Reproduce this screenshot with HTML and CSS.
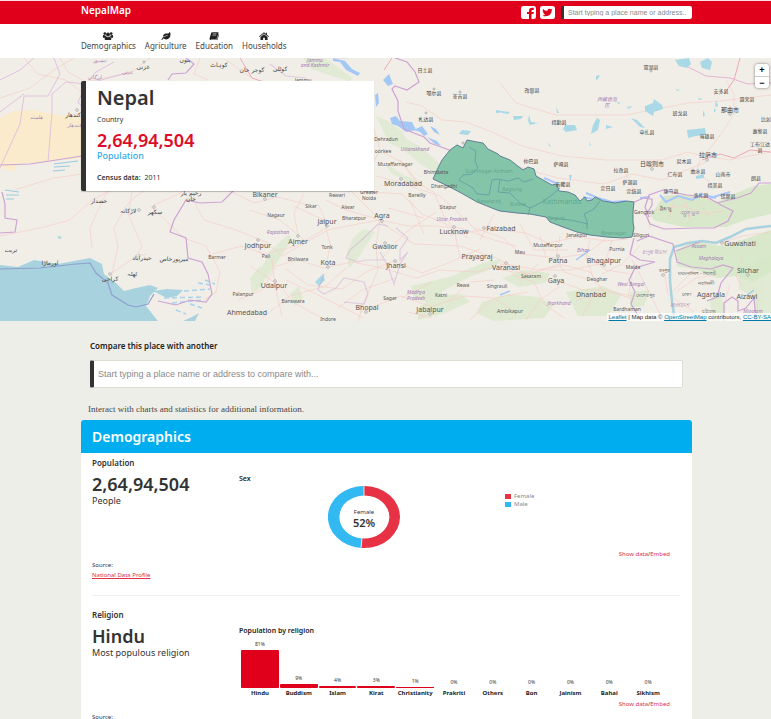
FILE: index.html
```html
<!DOCTYPE html>
<html lang="en">
<head>
<meta charset="utf-8">
<title>NepalMap: Nepal</title>
<link rel="stylesheet" href="styles.css">
</head>
<body>
<header class="topbar">
  <div class="wrap topbar-inner">
    <a class="brand" href="#">NepalMap</a>
    <div class="topbar-tools">
      <a class="social" href="#" aria-label="Facebook"><svg viewBox="0 0 15 14" preserveAspectRatio="none"><rect width="15" height="14" rx="2.5" fill="#fff"/><path d="M8 14V8.600H6V6.400H8V5c0-2 1.200-3 3-3h1.800v2.200h-1.300c-.8 0-1 .4-1 1v1.200h2.300l-.3 2.200h-2V14z" fill="#e0001b"/></svg></a>
      <a class="social" href="#" aria-label="Twitter"><svg viewBox="0 0 15 14" preserveAspectRatio="none"><rect width="15" height="14" rx="2.500" fill="#fff"/><path transform="translate(2.300 1.900) scale(.0203 .0198)" fill="#e0001b" d="M459.370 151.716c.325 4.548.325 9.097.325 13.645 0 138.720-105.583 298.558-298.558 298.558-59.452 0-114.680-17.219-161.137-47.106 8.447.974 16.568 1.299 25.340 1.299 49.055 0 94.213-16.568 130.274-44.832-46.132-.975-84.792-31.188-98.112-72.772 6.498.974 12.995 1.624 19.818 1.624 9.421 0 18.843-1.300 27.614-3.573-48.081-9.747-84.143-51.980-84.143-102.985v-1.299c13.969 7.797 30.214 12.670 47.431 13.319-28.264-18.843-46.781-51.005-46.781-87.391 0-19.492 5.197-37.360 14.294-52.954 51.655 63.675 129.300 105.258 216.365 109.807-1.624-7.797-2.599-15.918-2.599-24.040 0-57.828 46.782-104.934 104.934-104.934 30.213 0 57.502 12.670 76.670 33.137 23.715-4.548 46.456-13.320 66.599-25.340-7.798 24.366-24.366 44.833-46.132 57.827 21.117-2.273 41.584-8.122 60.426-16.243-14.292 20.791-32.161 39.308-52.628 54.253z"/></svg></a>
      <input class="top-search" type="text" aria-label="Find a place" placeholder="Start typing a place name or address..">
    </div>
  </div>
</header>

<nav class="mainnav">
  <div class="wrap mainnav-inner">
    <a href="#"><svg viewBox="0 0 12 9"><circle cx="2.400" cy="1.800" r="1.500"/><circle cx="9.600" cy="1.800" r="1.500"/><circle cx="6" cy="2.900" r="2.200"/><path d="M.2 6.300V4.800c0-1 .6-1.400 1.300-1.400.6.500 1 .6 1.800.5.100.8.400 1.300.9 1.700-.8.100-1.400.4-1.800.9H.7c-.3 0-.5-.1-.5-.2zM11.800 6.300V4.800c0-1-.6-1.400-1.300-1.400-.6.500-1 .6-1.800.5-.1.8-.4 1.300-.9 1.700.8.100 1.400.4 1.800.9h1.700c.3 0 .5-.1.5-.2zM2.200 7.900c0-1.400.5-2.700 1.900-2.700 1.200.8 2.600.8 3.800 0 1.400 0 1.900 1.300 1.900 2.700 0 .7-.4 1.100-1.100 1.100H3.300c-.7 0-1.100-.4-1.100-1.100z"/></svg>Demographics</a>
    <a href="#"><svg viewBox="0 0 576 512"><path d="M546.200 9.700c-5.600-12.500-21.600-13-28.300-1.200C486.900 62.400 431.400 96 368 96h-80C182 96 96 182 96 288c0 7 .8 13.700 1.500 20.500C161.300 262.800 253.400 224 384 224c8.800 0 16 7.200 16 16s-7.200 16-16 16C132.600 256 26 410.100 2.400 468c-6.600 16.300 1.200 34.900 17.500 41.600 16.400 6.800 35-1.100 41.800-17.300 1.500-3.600 20.900-47.900 71.900-90.600 32.400 43.900 94 85.800 174.900 77.200C465.500 467.500 576 326.700 576 154.300c0-50.200-10.800-102.200-29.800-144.600z"/></svg>Agriculture</a>
    <a href="#"><svg viewBox="0 0 12 9"><path d="M4 .3h6.300c.6 0 .9.500.7 1L9.300 7.100c-.1.400-.5.700-.9.700H2.600c-.3 0-.4.500 0 .5h6.200c.4 0 .7-.2.800-.6l1.600-5.400c.4.200.5.600.4 1L10 8.300c-.1.400-.5.700-1 .7H2.400C1.300 9 .7 8.100 1 7.200L2.800 1.200C3 .6 3.400.300 4 .300z"/><path d="M4.700 2h4.200M4.200 3.600h4.200" stroke="#fff" stroke-width=".6"/></svg>Education</a>
    <a href="#"><svg viewBox="0 0 12 9"><path d="M6 .3l2 1.700V.8h1.300v2.300L11.700 5l-.6.7L6 1.600.9 5.700.300 5z"/><path d="M6 2.400l4 3.200V9H7V6.400H5V9H2V5.600z"/></svg>Households</a>
  </div>
</nav>

<main>
<section class="map" aria-label="Map of Nepal">
  <svg class="map-canvas" viewBox="0 58 771 263" preserveAspectRatio="xMidYMid slice">
    <rect y="58" width="771" height="263" fill="#f1eee8"/>
    <!-- Desert -->
    <path d="M0 118L14 111 32 110 52 114 82 118V158L46 162 17 164 14 172 0 168z" fill="#f9ebcb"/>
    <!-- Forest and farmland -->
    <g fill="#d5e8c6" opacity=".6">
      <path d="M303 58l22 0 14 10 14 10-4 3-20-6-18-6zM376 116l12 5 14 10 4 8 15 8 20 18-6 8-16-10-14-12-16-8zM385 163l17 11 22 10-8 3-25-14zM271 250l18-16 3 5-14 22-12 18-8-4zM353 238l10-9 12 3-8 12-10 16-8 8-2-16zM411 286l38-9 34-14 18-4-6 9-26 9-26 14-13 12-16-4zM418 308l16-12 28-2 8 8-28 12-24 6zM482 302l26-8 30 3 16 8-10 13-50 3-18-8zM502 278l22-8 26 3-5 10-26 4zM566 292l36-6 20 8-14 22-30 0zM630 292l20-2-6 16-14 2z"/>
      <path d="M738 268l33-14v67h-14l-4-24-14-8z"/>
      <path d="M710 300l8-8 8 16-4 13h-10zM250 278l10-12 8 4-6 16-10 8zM290 294l9-8 4 12-8 8z"/>
    </g>
    <g fill="#d5e8c6" opacity=".85">
      <path d="M650 216l14-20 22-2 20 5 18 4 6 20-2 4-44 0-28-6z"/>
      <path d="M714 204l20-10 20-8 17-2v30l-26 6-16 6-18-6z"/>
      <path d="M676 250l20-9 24 5 22-6 29-10v42l-18 10-18-6-18 2-20-8-20-4z"/>
    </g>
    <!-- Sea -->
    <path d="M0 265l18 2 16-7 24 4 16-3 16-3 12 6 2 10 12 9 8 8 12-3 14-3 8 3-8 8-4 10 12 15H0z" fill="#a9d2df"/>
    <path d="M153 291l14-2 16 1-6 6-10 2zM192 317l7-4-4 8h-12zM136 298l10-3 4 3-10 4z" fill="#a9d2df"/>
    <path d="M160 293l50-4M164 298l40-1M172 303l32-3M198 283l12 2M205 280l10 4M176 310l10 4M190 304l12 4" stroke="#a9d2ec" stroke-width="1.500" stroke-dasharray="5 3" fill="none"/>
    <path d="M54 164l24-3M54 167l16-1M53 171l12-1M5 190l14 2M6 195l13 0M6 199l8 0" stroke="#98cbe0" stroke-width="1" fill="none"/>
    <!-- Roads -->
    <g fill="none" stroke="#f7cfc7" stroke-width=".7">
      <path d="M0 98l30-10 24-18 20-12M24 58l14 16 28 6 18 14M60 58l8 14 18 10M150 58l-18 14-46 10M200 58l-6 16 14 6M226 60l26 18M14 190l40-12 28-4M0 236l40-8 30-8 22-20 20-10M92 248l-2-20 10-22 8-16M112 274l6-28-4-18 12-22 10-10 24-14M110 274l24-16 12-4M132 192l-4 22 14 32-8 14M154 205l22-10 20-10 34 6 24 12 24-6 30 8M150 206l34 32 22 8 14 26-4 20-12 8M188 190l16 30 32 10 30 12 16 14M212 254l30-8 22 8 32-8 30-18M238 300l24-10 14-24 22-6 26 8 28-6 30 6 34 10 24-8 36 2 28-8 34 6 24-4M258 251l14 8 2 20 20 24 26 14M282 256l46-26 30-6 22-4 28 6 26 0 26 2 34 12 22 6M326 200l20 10 28 8 40 26 46 2 36 12 34 18M350 190l16 16 14 14-4 26 2 24-14 32-6 19M372 122l8 28-14 26 6 16 30 2 20 20 24 10 22 14M400 160l16 22 18 10 10 24 10 12 6 30 22 2M418 182l-16-20-20-10M376 176l22 6 42 14 24 22 20 20M394 261l-26 10-26 18-34-4-22-16M394 261l28 12 26-10 32-14M450 235l40-6 36 4 22 10 30-6 28 4 22-2M475 228l28 10 18 16 36 4 28-4 20-14M433 306l-12 12M433 306l32-10 28 2 20 12M500 270l30 4 30-10 30 8 14 20M555 280l28 10 24 0 28 10M500 262l16 14 18 6 10 22 20 14M588 256l18 14 26 4-4 24M556 258l8 14 26 8M640 246l-18 18-20 10M640 236l-16-12M632 260l16 30 12 24M664 270l4 24 26 18M676 292l20-14 24-4M680 200l20-4 20 8M656 210l26-4 24 8 18-4M520 224l14 26 34 0M540 236l6 22M560 236l-4 20M590 240l-4 18 10 26M612 240l-6 20M700 242l24 0 18-6 29-4M742 286l-6-10 6-20M702 156l-14-4-26 8-56 0-44-4-40-10-30-14-26-10-24-2-20-14-16-4M500 83l16 20 40 12 70 0 62-12 32-2 51-6M726 80l8 14 0 20-10 16-20 26M707 156l22 4 42-8M700 160l-4 12 14 10M508 164l50 14 46 6 28-10 30 6 44-18M626 174l10 20"/>
      <path d="M286 280l30 14 48 24M250 266l24 16 8 34M262 318l28-22 36-10 20-18M326 268l4-24-6-24-30-14M298 235l-4-22 10-20M250 210l30 10 24 20M328 226l-10-22M338 308l24-18 34-12M360 312l40-16 30 10M402 298l30-16M408 312l24 6M450 300l20-18 24-2M470 320l24-22 34-6M576 300l34-8 22 4M592 297l-10 20M480 240l14-26M436 212l-30 20-26 28M410 200l14 34M388 208l36 10M526 320l14-20 20-14M540 270l30 0 40-8M520 282l18-18M702 262l-30 30M724 304l6-20M758 300l-2 20M650 228l-2-10 8-8M668 220l6-18M690 222l-4-20M710 216l-12-14"/>
    </g>
    <path d="M740 58l-6 22-10 14M240 58l12 20 18 6M392 58l-8 12M702 160l18-6 14 4 16-8 21 2" fill="none" stroke="#eea9b7" stroke-width="1"/>
    <path d="M686 66l20 10 24 2 18 6 23-1" fill="none" stroke="#e5b4d4" stroke-width="1"/>
    <!-- Lakes and rivers -->
    <g fill="#a9d8e6">
      <path d="M596 76l4-1-2 4-2 1zM675 60l14-2 2 6-4 4-8-2zM700 62l8-4 4 4-2 8-8-2zM645 106l8-3 1-4 8 6 1 4-9 3-1 4-8-5zM565 125l10 0 2 5-11 2-3-3zM597 118l3 2-2 10-7 4 2-9zM606 125l7 2-7 2zM631 118l6 2 8 8-5-1zM687 130l18-2 1 7-10 1-8 2zM502 111l8 1-2 2-6-1zM513 116l10 0-2 3-7 1zM529 115l2 7 7 1-8 2-2-4zM556 107l3 6-2 0zM627 107l6-1-5 3zM617 102l4 1-3 1zM698 98l5 1-4 1zM716 100l2 6-3 1zM714 108l2 2-2 3zM703 110l2 5-2 2zM676 89l4 1-3 1zM548 142l3 5-2-1zM459 134l3-4 9 1-3 4zM502 110l4-1M496 110l10 2-10 1zM589 141l2 4-1 1zM569 175l3 0-2 7zM696 176l8-2 0 4-8 1zM57 237l3-1 2 2-3 1zM315 282l8-8 2 6-6 6z"/>
      <path d="M333 58l12 3 7 8 8 4-2 3-12-6-6-8-7-1zM383 80l6-6 4 10-5 2zM375 95l3-2 1 10-3 4zM390 118l6-2 4 5 12 1 4 8-10 2-8-6-6-2zM414 130l8-4 6 8-4 2-4-4zM427 137l10 4 4 5-6-2zM430 126l4 6 6 3-4-6z" fill="#a4c8f5"/>
    </g>
    <path d="M674 315l-2-14-2-20 0-22 4-12 14-4 14-2 14 2 14-6 16-8 25-3" fill="none" stroke="#a9d2df" stroke-width="2.500"/>
    <path d="M586 193l12 5 14 4 14-1M583 197l18 4M544 178l14 6M640 198l10-1M660 195l6 7 12-6 14 4 10-6 14 4M710 198l20-6" fill="none" stroke="#a9c6fa" stroke-width="2"/>
    <path d="M746 296l8-6M590 250l-14 10M500 295l10-4" fill="none" stroke="#a4c8f0" stroke-width="1.500"/>
    <!-- Borders -->
    <g fill="none" stroke="#cda3d4" stroke-width="1.200">
      <path d="M168 80l4-6 14-1 8-9-8-6M0 165l30-1 20-3 32-5M2 192l3 12 0 14 12 2-2 12-15 1M234 190l-12 12-22 1-14-3-12 20-4 12 16 6 2 20 14 4 6 12 4 20-6 8-16-2-14 5-18-4M395 58l12 4 8 10 4 10-12 8-12-4-3 3 6 12 0 10 6 18 20 8 6 6 22 8 16 8"/>
      <path d="M0 269l40-1 36-4 14-1 6 10 12 10 4 12 16 10 8 2 12-3 6-10" stroke="#8f9fce"/>
      <path d="M634 202l10-4 8 1 0 6-6 10 4 9 14 5 32-1 18 0 14-7 5-10-12-6-14-8-20-2-24-5-14 5-4 12 4 10M771 183l-12 0-8 10-14 5-20 5M637 241l12-5 12 4 12 4 4 18 14 5 20 2 12-4 10 3-12 15-4 14-10 4M634 238l-4 16 10 6 15 2-20 6-6 12 6 12-4 12 10 16M700 242l-24 9M724 321l0-18 8-6 6 4 0 10 8-3 8-10 2 23"/>
      <path d="M388 226l-10-2-12 12-16 14-4 8 12 4 8-2 20 0M396 228l12 10-8 12 0 10 8-8-8 12-6 20-6-18-8-14M348 58l-12 0M270 64l16 12 20 2M324 274l-6 16 6 4 12-6 8-10 20 4 4 12-4 10-20-2" opacity=".45"/>
    </g>
    <g fill="none" stroke="#dbb8de" stroke-width=".8">
      <path d="M54 58l6 16-12 22-24 0-4 28-20 44M24 94l-24 18M52 112l0-18 14-12 20 2 10-12 18-10M52 112l-4 50M86 84l-8 18 6 8M0 80l20-10 14-12M94 82l36-10"/>
    </g>
    <!-- Selected country -->
    <path class="country" d="M433 179l4-9 5-10 8-10 7-5 6 3 4-8 10 2 6 1 5 6 10 5 2 2 10 4 13 10 5-3 6 2 2 7 7 4 9 5 5-1 2 7 9 1 7 3 5 6 5-4 2 4 5-1 3-3 8 4 12 2 12-2 7 1-1 10 0 10 1 6-2 9-9 1-16-1-17-2-13-3-14-5-13-5-4-5-16-3-13-1-17-2-3-1-20-8-14-8-13-7z"/>
    <path d="M469 147l7 4-1 10 3 7-6 6-9 1-4 5 14 8 4 6 12 1 3-15 6-1 10 2 10-3 6 4 9-3M500 180l-2 12 12 1 10 10 10 5 12-6 10-7 8-7M530 208l-2 7M550 218l20 2 18 4M600 201l-6 8-10 5 3 7 0 8" fill="none" stroke="#5f9ba0" stroke-width=".8"/>
    <g class="lb-dim">
      <text x="489" y="173">Sukhinagar-Airtham</text><text x="512" y="191">Baglung</text><text x="518" y="206">Butwal</text><text x="562" y="204" class="md">Kathmandu</text><text x="556" y="220">Birgunj</text><text x="614" y="235">Biratnagar</text><text x="489" y="203">Nepalgunj</text>
    </g>
    <!-- Place markers -->
    <g fill="#fff" stroke="#888" stroke-width=".6">
      <circle cx="382" cy="221" r="1.300"/><circle cx="454" cy="227" r="1.300"/><circle cx="484" cy="228" r="1.300"/><circle cx="298" cy="236" r="1.300"/><circle cx="385" cy="243" r="1.300"/><circle cx="395" cy="261" r="1.300"/><circle cx="327" cy="226" r="1.300"/><circle cx="328" cy="267" r="1.300"/><circle cx="258" cy="240" r="1.300"/><circle cx="275" cy="281" r="1.300"/><circle cx="265" cy="199" r="1.300"/><circle cx="401" cy="179" r="1.300"/><circle cx="506" cy="263" r="1.300"/><circle cx="558" cy="256" r="1.300"/><circle cx="604" cy="265" r="1.300"/><circle cx="555" cy="276" r="1.300"/><circle cx="722" cy="243" r="1.300"/><circle cx="748" cy="275" r="1.300"/><circle cx="707" cy="160" r="1.300"/><circle cx="652" cy="169" r="1.300"/><circle cx="730" cy="114" r="1.300"/><circle cx="77" cy="110" r="1.300"/><circle cx="110" cy="274" r="1.300"/><circle cx="154" cy="207" r="1.300"/><circle cx="139" cy="210" r="1.300"/><circle cx="366" cy="312" r="1.300"/><circle cx="430" cy="314" r="1.300"/><circle cx="663" cy="275" r="1.300"/><circle cx="562" cy="185" r="1"/><circle cx="144" cy="62" r="1"/><circle cx="463" cy="143" r="1"/><circle cx="532" cy="93" r="1"/><circle cx="434" cy="89" r="1"/><circle cx="460" cy="92" r="1"/><circle cx="426" cy="113" r="1"/><circle cx="651" cy="71" r="1"/>
    </g>
    <g class="lb-lg">
      <text x="403" y="186">Moradabad</text><text x="382" y="218">Agra</text><text x="454" y="234">Lucknow</text><text x="501" y="231">Faizabad</text><text x="327" y="224">Jaipur</text><text x="298" y="244">Ajmer</text><text x="385" y="249">Gwalior</text><text x="396" y="268">Jhansi</text><text x="328" y="265">Kota</text><text x="258" y="248">Jodhpur</text><text x="274" y="288">Udaipur</text><text x="247" y="315">Ahmedabad</text><text x="367" y="310">Bhopal</text><text x="430" y="312">Jabalpur</text><text x="265" y="197">Bikaner</text><text x="477" y="259">Prayagraj</text><text x="506" y="270">Varanasi</text><text x="558" y="263">Patna</text><text x="604" y="263">Bhagalpur</text><text x="556" y="283">Gaya</text><text x="591" y="297">Dhanbad</text><text x="740" y="246">Guwahati</text><text x="748" y="273">Silchar</text><text x="711" y="297">Agartala</text><text x="747" y="299">Aizawl</text>
    </g>
    <g class="lb-md">
      <text x="386" y="141">Dehradun</text><text x="395" y="166">Muzaffarnagar</text><text x="417" y="197">Bareilly</text><text x="448" y="209">Sitapur</text><text x="337" y="197">Rewari</text><text x="369" y="194">Greater</text><text x="369" y="200">Noida</text><text x="311" y="208">Sikar</text><text x="348" y="209">Alwar</text><text x="354" y="220">Bharatpur</text><text x="276" y="217">Nagaur</text><text x="327" y="249">Tonk</text><text x="266" y="258">Pali</text><text x="298" y="261">Bhilwara</text><text x="217" y="259">Barmer</text><text x="243" y="296">Palanpur</text><text x="293" y="303">Banswara</text><text x="328" y="321">Indore</text><text x="390" y="300">Sagar</text><text x="441" y="297">Katni</text><text x="463" y="287">Rewa</text><text x="497" y="288">Singrauli</text><text x="510" y="313">Ambikapur</text><text x="531" y="278">Sasaram</text><text x="520" y="254">Mau</text><text x="548" y="247">Muzaffarpur</text><text x="617" y="251">Purnia</text><text x="577" y="237">Janakpur</text><text x="597" y="281">Deoghar</text><text x="633" y="269">Malda</text><text x="627" y="311">Bardhaman</text><text x="644" y="214">Gangtok</text><text x="641" y="237">Siliguri</text><text x="444" y="188">Dhangadhi</text><text x="436" y="174">Bhimdatta</text><text x="303" y="82">Jammu</text><text x="383" y="153">oorkee</text><text x="665" y="211">ཐིམ་ཕུ</text><text x="664" y="272">রংপুর</text><text x="697" y="275">ময়মনসিংহ - সিলেট</text><text x="706" y="285">নরসিংদী</text><text x="645" y="297">মেহেরপুর</text><text x="686" y="296">ঢাকা</text><text x="709" y="313">চট্টগ্রাম</text>
    </g>
    <g class="lb-state">
      <text x="315" y="62">Jammu</text><text x="315" y="67">and Kashmir</text><text x="415" y="151">Uttarakhand</text><text x="452" y="221">Uttar Pradesh</text><text x="278" y="234">Rajasthan</text><text x="416" y="294">Madhya</text><text x="416" y="300">Pradesh</text><text x="583" y="252">Bihar</text><text x="559" y="305">Jharkhand</text><text x="631" y="286">West Bengal</text><text x="699" y="248">Assam</text><text x="711" y="260">Meghalaya</text><text x="753" y="313">Mizoram</text><text x="654" y="254">রংপুর বিভাগ</text><text x="679" y="307">বাংলাদেশ</text><text x="689" y="215">འབྲུག་ཡུལ</text><text x="607" y="101">西藏自治</text><text x="607" y="107">区</text><text x="99" y="62">نیمروز</text><text x="94" y="79">ارزگان</text><text x="127" y="74">غزنی</text><text x="36" y="119">هلمند</text><text x="74" y="127">کندهار</text>
    </g>
    <g class="lb-cjk">
      <text x="425" y="72">日土县</text><text x="434" y="95">噶尔县</text><text x="460" y="98">革吉县</text><text x="426" y="121">札达县</text><text x="532" y="92">改则县</text><text x="651" y="69">双湖县</text><text x="721" y="93">安多县</text><text x="747" y="101">聂荣县</text><text x="680" y="115">班戈县</text><text x="559" y="124">措勤县</text><text x="647" y="134">申扎县</text><text x="707" y="138">当雄县</text><text x="760" y="133">嘉黎县</text><text x="760" y="146">工布江达</text><text x="760" y="152">县</text><text x="766" y="121">比如</text><text x="531" y="163">仲巴县</text><text x="561" y="166">萨嘎县</text><text x="563" y="186">吉隆县</text><text x="621" y="172">拉孜县</text><text x="684" y="163">尼木县</text><text x="675" y="176">仁布县</text><text x="698" y="173">曲水县</text><text x="723" y="176">山南市</text><text x="756" y="180">朗县</text><text x="630" y="184">萨迦县</text><text x="608" y="190">定日县</text><text x="634" y="193">定结县</text><text x="671" y="193">康马县</text><text x="701" y="197">洛扎县</text><text x="715" y="187">措美县</text><text x="728" y="198">错那县</text>
      <text class="big" x="730" y="112">那曲市</text><text class="big" x="708" y="157">拉萨市</text><text class="big" x="652" y="166">日喀则市</text>
    </g>
    <g class="lb-ar">
      <text x="143" y="69">غزنی</text><text x="219" y="67">کوہاٹ</text><text x="252" y="72">گوجر خان</text><text x="280" y="71">کوٹلی</text><text x="73" y="117">کندهار</text><text x="191" y="195">رحیم یار</text><text x="191" y="201">خان</text><text x="99" y="203">خضدار</text><text x="128" y="213">لاڑکانہ</text><text x="155" y="214">سکھر</text><text x="11" y="252">تربت</text><text x="50" y="265">اورماڑا</text><text x="142" y="260">حیدرآباد</text><text x="174" y="261">میرپورخاص</text><text x="132" y="276">ٹھٹہ</text><text x="110" y="281">کراچی</text><text x="185" y="62">بنوں</text>
    </g>
  </svg>
  <div class="zoomer">
    <button type="button" aria-label="Zoom in">+</button>
    <button type="button" aria-label="Zoom out">−</button>
  </div>
  <div class="place">
    <h1>Nepal</h1>
    <p class="place-kind">Country</p>
    <p class="place-number">2,64,94,504</p>
    <p class="place-caption">Population</p>
    <p class="place-census"><b>Census data:</b> 2011</p>
  </div>
  <div class="credit"><a href="#">Leaflet</a> | Map data © <a href="#">OpenStreetMap</a> contributors, <a href="#">CC-BY-SA</a></div>
</section>

<div class="wrap">
  <form class="compare">
    <label for="compare">Compare this place with another</label>
    <input id="compare" type="text" placeholder="Start typing a place name or address to compare with...">
  </form>
  <p class="hint">Interact with charts and statistics for additional information.</p>

  <section class="panel">
    <h2>Demographics</h2>
    <article class="topic">
      <div class="fact">
        <h3>Population</h3>
        <p class="fact-value">2,64,94,504</p>
        <p class="fact-label">People</p>
        <p class="source">Source:<a href="#">National Data Profile</a></p>
      </div>
      <div class="chart">
        <h4>Sex</h4>
        <div class="pie">
          <div class="donut">
            <svg viewBox="0 0 72 62">
              <path d="M36 0A36 31 0 0 1 36 62 36 31 0 0 1 33 61.900L34 52.400A25 21.500 0 1 0 36 9.500z" fill="#e63244"/>
              <path d="M36 0A36 31 0 0 0 33 61.900L34 52.400A25 21.500 0 0 1 36 9.500z" fill="#33b9f2"/>
              <path d="M36 0v9.500M33 62l1-9.600" stroke="#fff" stroke-width=".8"/>
            </svg>
            <p class="donut-text">Female<b>52%</b></p>
          </div>
          <ul class="legend">
            <li class="female">Female</li>
            <li class="male">Male</li>
          </ul>
        </div>
        <p class="embed"><a href="#">Show data</a>/<a href="#">Embed</a></p>
      </div>
    </article>
    <article class="topic">
      <div class="fact">
        <h3>Religion</h3>
        <p class="fact-value">Hindu</p>
        <p class="fact-label">Most populous religion</p>
        <p class="source">Source:<a href="#">National Data Profile</a></p>
      </div>
      <div class="chart">
        <h4>Population by religion</h4>
        <ul class="bars">
          <li><span>81%</span><i style="height:38px"></i><b>Hindu</b></li>
          <li><span>9%</span><i style="height:4px"></i><b>Buddism</b></li>
          <li><span>4%</span><i style="height:2px"></i><b>Islam</b></li>
          <li><span>3%</span><i style="height:2px"></i><b>Kirat</b></li>
          <li><span>1%</span><i style="height:1px"></i><b>Christianity</b></li>
          <li><span>0%</span><i style="height:0px"></i><b>Prakriti</b></li>
          <li><span>0%</span><i style="height:0px"></i><b>Others</b></li>
          <li><span>0%</span><i style="height:0px"></i><b>Bon</b></li>
          <li><span>0%</span><i style="height:0px"></i><b>Jainism</b></li>
          <li><span>0%</span><i style="height:0px"></i><b>Bahai</b></li>
          <li><span>0%</span><i style="height:0px"></i><b>Sikhism</b></li>
        </ul>
        <p class="embed"><a href="#">Show data</a>/<a href="#">Embed</a></p>
      </div>
    </article>
  </section>
</div>
</main>
</body>
</html>
```
FILE: styles.css
```css
* { box-sizing: border-box; }
html { scrollbar-width: none; }
body {
  margin: 0;
  background: #eeeee8;
  color: #333;
  font: 8px/12px "Noto Sans", "Open Sans", sans-serif;
}
h1, h2, h3, h4, p, ul { margin: 0; padding: 0; }
ul { list-style: none; }
a { color: inherit; text-decoration: none; }
input { outline: none; border-radius: 2px; }
.wrap { margin: 0 79px 0 81px; }

/* Top bar */
.topbar { background: #e0001b; border-top: 1px solid #fbe3e5; }
.topbar-inner { display: flex; justify-content: space-between; height: 23px; }
.brand { color: #fff; font-size: 10px; font-weight: 600; line-height: 18px; }
.topbar-tools { display: flex; align-items: flex-start; gap: 4px; padding-top: 5px; }
.social svg { display: block; width: 15px; height: 13px; }
.top-search {
  width: 131px;
  height: 13px;
  margin-left: 2px;
  padding: 0 0 0 4px;
  border: 0;
  border-left: 3px solid #333;
  font: 7px/13px "Liberation Sans", Arial, sans-serif;
}
::placeholder { color: #8a8a8a; opacity: 1; }

/* Navigation */
.mainnav { background: #fff; }
.mainnav-inner { display: flex; gap: 9px; height: 34px; padding-top: 8px; }
.mainnav a { display: flex; flex-direction: column; align-items: center; line-height: 12px; color: #444; }
.mainnav svg { width: 12px; height: 8px; fill: #222; }

/* Map */
.map { position: relative; height: 263px; overflow: hidden; }
.map-canvas { display: block; width: 100%; height: 100%; }
.map-canvas text { text-anchor: middle; }
.country { fill: #84c5aa; stroke: #5d7f94; stroke-width: 1; }
.lb-lg { font-size: 7px; fill: #555; }
.lb-md { font-size: 5px; fill: #555; }
.lb-dim { font-size: 5px; fill: #62a68c; }
.lb-dim .md { font-size: 7px; }
.lb-state { font-size: 5px; font-style: italic; fill: #a67bb5; }
.lb-cjk { font: 5px "Noto Sans CJK SC", sans-serif; fill: #444; }
.lb-cjk .big { font-size: 6px; }
.lb-ar { font: 6px "DejaVu Sans", sans-serif; fill: #444; }
.lb-state, .lb-md { font-family: "Noto Sans", "Noto Sans CJK SC", "DejaVu Sans", sans-serif; }
.zoomer {
  position: absolute;
  top: 6px;
  right: 2px;
  width: 14px;
  border-radius: 3px;
  background: #fff;
  box-shadow: 0 0 3px rgba(0, 0, 0, .5);
}
.zoomer button {
  display: block;
  width: 100%;
  height: 12px;
  padding: 0;
  border: 0;
  background: none;
  color: #000;
  font: bold 9px/12px "Liberation Sans", Arial, sans-serif;
}
.zoomer button + button { border-top: 1px solid #ccc; }
.place {
  position: absolute;
  top: 23px;
  left: 81px;
  width: 293px;
  height: 110px;
  padding: 5px 11px;
  border-left: 5px solid #333;
  border-radius: 2px 0 0 2px;
  background: #fff;
  box-shadow: 0 1px 1px rgba(0, 0, 0, .25);
}
.place h1 { font-size: 20px; line-height: 24px; font-weight: 600; }
.place-kind { margin-top: 4px; font-size: 7px; line-height: 12px; }
.place-number { margin-top: 4px; font-size: 18px; line-height: 20px; font-weight: 600; color: #dc0d28; }
.place-caption { font-size: 9px; line-height: 12px; font-weight: 500; color: #2fabea; }
.place-census { margin-top: 10px; font-size: 7px; line-height: 12px; }
.place-census b { margin-right: 2px; font-weight: 600; }
.credit {
  position: absolute;
  right: 0;
  bottom: 0;
  padding-left: 1px;
  background: rgba(255, 255, 255, .7);
  font: 6px/8px "Liberation Sans", Arial, sans-serif;
  white-space: nowrap;
}
.credit a { color: #0078a8; text-decoration: underline; }

/* Compare form */
.compare { padding: 19px 9px 0; }
.compare label { display: block; font-weight: 600; font-size: 8px; line-height: 12px; color: #222; }
.compare input {
  display: block;
  width: 100%;
  height: 28px;
  margin-top: 8px;
  padding: 0 4px;
  border: 1px solid #ddddd6;
  border-left: 4px solid #333;
  font: 9px/26px "Liberation Sans", Arial, sans-serif;
}
.hint {
  padding: 15px 7px 5px;
  color: #444;
  font: 9px/12px "Liberation Serif", serif;
}

/* Data panel */
.panel { background: #fff; border-radius: 3px 3px 0 0; }
.panel h2 {
  padding: 0 11px;
  border-radius: 3px 3px 0 0;
  background: #00aeef;
  color: #fff;
  font-size: 14px;
  line-height: 33px;
  font-weight: 600;
}
.topic {
  display: grid;
  grid-template-columns: 147px 1fr;
  height: 143px;
  margin: 0 12px 9px 11px;
  padding-top: 4px;
  border-bottom: 1px solid #f0f0f0;
}
.fact { display: flex; flex-direction: column; }
.fact h3 { font-size: 8px; line-height: 12px; font-weight: 600; }
.fact-value { margin-top: 4px; font-size: 18px; line-height: 22px; font-weight: 600; }
.fact-label { font-size: 9px; line-height: 12px; }
.source { margin-top: 53px; font-size: 6px; line-height: 10px; }
.source a { display: block; color: #e0304a; text-decoration: underline; }
.chart { padding: 17px 10px 0 0; }
.chart h4 { font-size: 7px; line-height: 10px; font-weight: 600; color: #222; }
.pie { display: flex; margin-left: 89px; padding-top: 2px; }
.donut { position: relative; flex: none; width: 72px; height: 62px; }
.donut svg { display: block; width: 100%; height: 100%; }
.donut-text {
  position: absolute;
  inset: 21px 0 auto;
  text-align: center;
  font-size: 6px;
  line-height: 10px;
}
.donut-text b { display: block; font-size: 11px; line-height: 12px; font-weight: 600; }
.legend { margin: 6px 0 0 105px; font-size: 6px; line-height: 8px; color: #888; }
.legend li { display: flex; align-items: center; gap: 3px; }
.legend li::before { content: ""; width: 6px; height: 5px; background: #e63244; }
.legend .male::before { background: #33b9f2; }
.embed { text-align: right; font-size: 6px; line-height: 12px; }
.embed a { color: #e0304a; }
.bars {
  display: grid;
  grid-template-columns: repeat(11, 1fr);
  gap: 1px;
  height: 62px;
  padding: 0 3px 0 2px;
}
.bars li { display: flex; flex-direction: column; justify-content: flex-end; align-items: center; }
.bars span { font-size: 5px; line-height: 10px; margin-bottom: 1px; }
.bars i { width: 100%; background: #e0001b; border-radius: 1px; }
.bars b { font-size: 6px; line-height: 10px; font-weight: 700; color: #222; }
```
